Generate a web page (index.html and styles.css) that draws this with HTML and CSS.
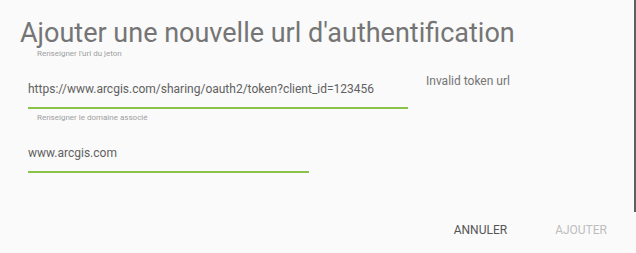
FILE: index.html
```html
<!DOCTYPE html>
<html lang="fr">
<head>
  <meta charset="UTF-8" />
  <title>Ajouter une url d'authentification</title>
  <link rel="stylesheet" href="styles.css">
</head>
<body>
  <div class="dialog">
    <h2 class="dialog-title">Ajouter une nouvelle url d'authentification</h2>

    <div class="dialog-content">
      <div class="field-row">
        <div class="field field-wide">
          <label class="field-label">Renseigner l'url du jeton</label>
          <div class="field-value">https://www.arcgis.com/sharing/oauth2/token?client_id=123456</div>
        </div>
        <div class="field-error">Invalid token url</div>
      </div>

      <div class="field-row">
        <div class="field field-short">
          <label class="field-label">Renseigner le domaine associé</label>
          <div class="field-value">www.arcgis.com</div>
        </div>
      </div>
    </div>

    <div class="dialog-actions">
      <button class="btn">Annuler</button>
      <button class="btn btn-disabled" disabled>Ajouter</button>
    </div>
  </div>
</body>
</html>
```

FILE: styles.css
```css
body {
  margin: 0;
  font-family: Roboto, 'Liberation Sans', sans-serif;
  background-color: #fafafa;
  color: #616161;
}
.dialog {
  height: 253px;
  position: relative;
}
/* bord sombre à droite */
.dialog::after {
  content: "";
  position: absolute;
  top: 0;
  right: 0;
  width: 2px;
  height: 212px;
  background: #5f5f5f;
}
.dialog-title {
  margin: 0;
  padding: 17px 0 0 20px;
  font-size: 27px;
  line-height: 32px;
  font-weight: 400;
  color: #757575;
}
.dialog-content {
  padding-left: 28px;
}
.field-row {
  display: flex;
  align-items: flex-start;
}
.field {
  display: flex;
  flex-direction: column;
}
.field-wide {
  width: 380px;
}
.field-short {
  width: 281px;
}
.field-label {
  font-size: 8px;
  line-height: 10px;
  color: #9e9e9e;
  padding-left: 9px;
}
.field-value {
  font-size: 12px;
  line-height: 16px;
  padding: 22px 0 10px 0;
  border-bottom: 2px solid #8bc34a;
  color: #616161;
}
.field-error {
  margin: 24px 0 0 18px;
  font-size: 12px;
  line-height: 16px;
  color: #757575;
}
.field-row + .field-row {
  margin-top: 4px;
}
.dialog-actions {
  display: flex;
  justify-content: flex-end;
  gap: 32px;
  position: absolute;
  right: 21px;
  bottom: 10px;
}
.btn {
  background: none;
  border: none;
  font-family: inherit;
  font-size: 12px;
  line-height: 14px;
  text-transform: uppercase;
  color: #555;
  padding: 6px 8px;
}
.btn-disabled {
  color: #bdbdbd;
}
```
